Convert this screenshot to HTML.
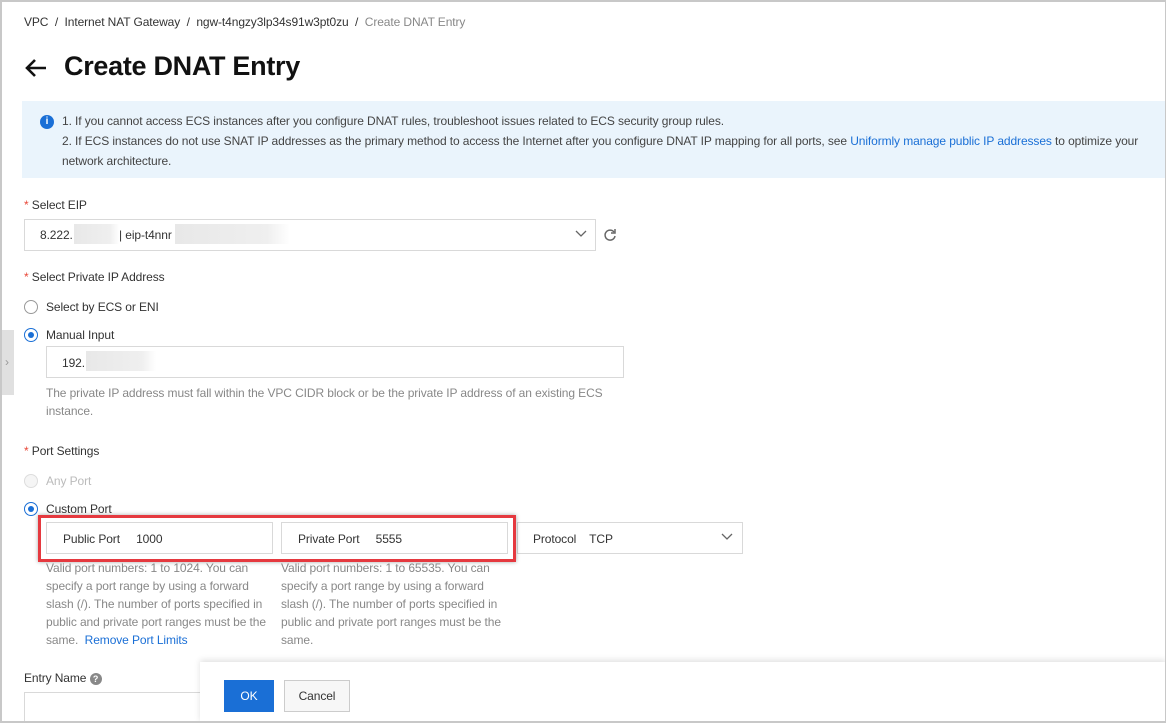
<!DOCTYPE html>
<html style="width:1166px;height:723px;overflow:hidden"><head><meta charset="utf-8"><style>
*{box-sizing:border-box;margin:0;padding:0}
body{width:1166px;height:723px;overflow:hidden;background:#fff;font-family:"Liberation Sans",sans-serif;font-size:12px;color:#333;position:relative;letter-spacing:-0.1px}
.frame{position:absolute;inset:0;border:2px solid #c8c8c8;border-right-width:1px;border-bottom-width:2px;pointer-events:none;z-index:10}
.a{position:absolute;white-space:nowrap}
.box{position:absolute;border:1px solid #d9d9d9;background:#fff}
.star{color:#e84738}
.radio{position:absolute;width:14px;height:14px;border-radius:50%;border:1px solid #999;background:#fff}
.radio.on{border-color:#1a6fd6}
.radio.on::after{content:"";position:absolute;left:3px;top:3px;width:6px;height:6px;border-radius:50%;background:#1a6fd6}
.help{color:#888;line-height:18px;white-space:normal}
.blur{position:absolute;background:linear-gradient(90deg,#e8e8e8,#efefef 80%,#fff)}
</style></head><body>
<div class="frame"></div>
<div class="a" style="left:24px;top:15px;color:#333">VPC&nbsp;&nbsp;/&nbsp;&nbsp;Internet NAT Gateway&nbsp;&nbsp;/&nbsp;&nbsp;ngw-t4ngzy3lp34s91w3pt0zu&nbsp;&nbsp;/&nbsp;&nbsp;<span style="color:#888">Create DNAT Entry</span></div>
<svg class="a" style="left:24px;top:58px" width="24" height="20" viewBox="0 0 24 20"><path d="M22 10H3M11 2L3 10l8 8" stroke="#111" stroke-width="2.6" fill="none"/></svg>
<div class="a" style="left:64px;top:51px;font-size:27px;font-weight:bold;color:#111;letter-spacing:-0.3px">Create DNAT Entry</div>
<div class="a" style="left:22px;top:101px;width:1144px;height:77px;background:#eaf4fc"></div>
<div class="a" style="left:40px;top:115px;width:14px;height:14px;border-radius:50%;background:#1a6fd6;color:#fff;font-size:10px;font-weight:bold;text-align:center;line-height:14px">i</div>
<div class="a" style="left:62px;top:111px;width:1095px;line-height:20px;color:#444;white-space:normal">1. If you cannot access ECS instances after you configure DNAT rules, troubleshoot issues related to ECS security group rules.<br>2. If ECS instances do not use SNAT IP addresses as the primary method to access the Internet after you configure DNAT IP mapping for all ports, see <span style="color:#1a6fd6">Uniformly manage public IP addresses</span> to optimize your network architecture.</div>
<div class="a" style="left:24px;top:198px"><span class="star">*</span> Select EIP</div>
<div class="box" style="left:24px;top:219px;width:572px;height:32px"></div>
<div class="a" style="left:40px;top:228px">8.222.</div>
<div class="blur" style="left:74px;top:224px;width:45px;height:20px"></div>
<div class="a" style="left:119px;top:228px">| eip-t4nnr</div>
<div class="blur" style="left:175px;top:224px;width:115px;height:20px"></div>
<svg class="a" style="left:575px;top:229px" width="12" height="10"><path d="M1 2l5 5 5-5" stroke="#666" fill="none" stroke-width="1.3"/></svg>
<svg class="a" style="left:603px;top:228px" width="14" height="14" viewBox="0 0 14 14"><path d="M11 4A5 5 0 1 0 12 8" stroke="#666" fill="none" stroke-width="1.5"/><path d="M12 1v4H8" stroke="#666" fill="none" stroke-width="1.5"/></svg>
<div class="a" style="left:24px;top:270px"><span class="star">*</span> Select Private IP Address</div>
<div class="radio" style="left:24px;top:300px"></div><div class="a" style="left:46px;top:300px">Select by ECS or ENI</div>
<div class="radio on" style="left:24px;top:328px"></div><div class="a" style="left:46px;top:328px">Manual Input</div>
<div class="a" style="left:0;top:330px;width:14px;height:65px;background:#e0e0e0;color:#999;font-size:12px;line-height:65px;text-align:center">›</div>
<div class="box" style="left:46px;top:346px;width:578px;height:32px"></div>
<div class="a" style="left:62px;top:356px">192.</div>
<div class="blur" style="left:86px;top:351px;width:70px;height:20px"></div>
<div class="a help" style="left:46px;top:384px;width:580px">The private IP address must fall within the VPC CIDR block or be the private IP address of an existing ECS instance.</div>
<div class="a" style="left:24px;top:444px"><span class="star">*</span> Port Settings</div>
<div class="radio" style="left:24px;top:474px;border-color:#ddd;background:#f5f5f5"></div><div class="a" style="left:46px;top:474px;color:#bbb">Any Port</div>
<div class="radio on" style="left:24px;top:502px"></div><div class="a" style="left:46px;top:502px">Custom Port</div>
<div class="box" style="left:46px;top:522px;width:227px;height:32px"></div>
<div class="a" style="left:63px;top:532px">Public Port&nbsp;&nbsp;&nbsp;&nbsp;&nbsp;1000</div>
<div class="box" style="left:281px;top:522px;width:227px;height:32px"></div>
<div class="a" style="left:298px;top:532px">Private Port&nbsp;&nbsp;&nbsp;&nbsp;&nbsp;5555</div>
<div class="box" style="left:517px;top:522px;width:226px;height:32px"></div>
<div class="a" style="left:533px;top:532px">Protocol&nbsp;&nbsp;&nbsp;&nbsp;TCP</div>
<svg class="a" style="left:721px;top:532px" width="12" height="10"><path d="M1 2l5 5 5-5" stroke="#666" fill="none" stroke-width="1.3"/></svg>
<div class="a" style="left:38px;top:515px;width:478px;height:47px;border:3px solid #e5393f;box-shadow:0 0 4px rgba(0,0,0,.35)"></div>
<div class="a help" style="left:46px;top:559px;width:230px">Valid port numbers: 1 to 1024. You can specify a port range by using a forward slash (/). The number of ports specified in public and private port ranges must be the same.&nbsp;&nbsp;<span style="color:#1a6fd6">Remove Port Limits</span></div>
<div class="a help" style="left:281px;top:559px;width:230px">Valid port numbers: 1 to 65535. You can specify a port range by using a forward slash (/). The number of ports specified in public and private port ranges must be the same.</div>
<div class="a" style="left:24px;top:671px">Entry Name <span style="display:inline-block;width:12px;height:12px;border-radius:50%;background:#888;color:#fff;font-size:9px;text-align:center;line-height:12px;font-weight:bold">?</span></div>
<div class="box" style="left:24px;top:692px;width:200px;height:31px"></div>
<div class="a" style="left:200px;top:662px;width:966px;height:61px;background:#fff;box-shadow:0 -2px 6px rgba(0,0,0,.12)"></div>
<div class="a" style="left:224px;top:680px;width:50px;height:32px;background:#1a6fd6;color:#fff;text-align:center;line-height:32px">OK</div>
<div class="a" style="left:284px;top:680px;width:66px;height:32px;border:1px solid #ccc;background:#f7f7f7;text-align:center;line-height:30px">Cancel</div>
</body></html>
